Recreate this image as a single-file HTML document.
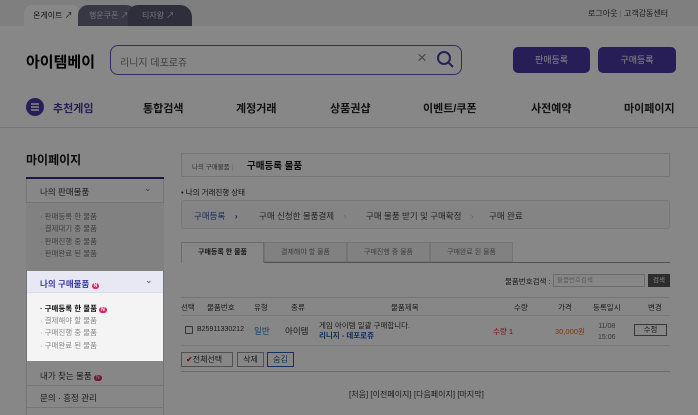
<!DOCTYPE html>
<html><head><meta charset="utf-8"><style>
*{box-sizing:border-box;margin:0;padding:0}
body{width:698px;height:415px;overflow:hidden;position:relative;background:#fff;font-family:"Liberation Sans","Noto Sans CJK KR",sans-serif;color:#333}
.a{position:absolute;white-space:nowrap}
#ov{position:absolute;left:0;top:0;width:698px;height:415px;background:rgba(0,0,0,0.47);z-index:5}
.hl{z-index:6}
</style></head><body>
<div class="a" style="left:0;top:0;width:698px;height:26px;background:#f0f0f0"></div>
<div class="a" style="left:24px;top:5px;width:56px;height:21px;background:#fff;border-radius:8px 8px 0 0;font-size:8px;line-height:21px;padding-left:9px;color:#222">온게이트 ↗</div>
<div class="a" style="left:78px;top:5px;width:58px;height:21px;background:#6a6a82;border-radius:10px 10px 0 0;font-size:8px;line-height:21px;padding-left:11px;color:#ddd">행운쿠폰 ↗</div>
<div class="a" style="left:128px;top:5px;width:64px;height:21px;background:#5a5a72;border-radius:10px 12px 0 0;font-size:8px;line-height:21px;padding-left:14px;color:#ddd">티자왕 ↗</div>
<div class="a" style="left:588px;top:8px;font-size:8px;color:#333">로그아웃 <span style="color:#bbb">|</span> 고객감동센터</div>
<div class="a" style="left:26px;top:51px;font-size:15px;font-weight:bold;color:#000">아이템베이</div>
<div class="a" style="left:110px;top:45px;width:352px;height:30px;border:1.5px solid #5b4fc4;border-radius:8px;background:#fff"></div>
<div class="a" style="left:120px;top:54px;font-size:10px;color:#777">리니지 데포로쥬</div>
<div class="a" style="left:417px;top:48px;font-size:17px;color:#888">×</div>
<svg class="a" style="left:436px;top:50px" width="18" height="20"><circle cx="8" cy="8" r="6" fill="none" stroke="#4a3fa8" stroke-width="2"/><path d="M12 12l5 5" stroke="#4a3fa8" stroke-width="2"/></svg>
<div class="a" style="left:513px;top:47px;width:77px;height:26px;background:#4a3aa6;border-radius:5px;color:#fff;font-size:9px;text-align:center;line-height:26px">판매등록</div>
<div class="a" style="left:598px;top:47px;width:78px;height:26px;background:#4a3aa6;border-radius:5px;color:#fff;font-size:9px;text-align:center;line-height:26px">구매등록</div>
<svg class="a" style="left:26px;top:98px" width="18" height="18"><circle cx="9" cy="9" r="9" fill="#4a3aa6"/><path d="M5 6h8M5 9h8M5 12h8" stroke="#fff" stroke-width="1.5"/></svg>
<div class="a" style="left:53px;top:100px;font-size:11px;font-weight:bold;color:#4a3aa6">추천게임</div>
<div class="a" style="left:143px;top:100px;font-size:11px;font-weight:bold;color:#222">통합검색</div>
<div class="a" style="left:236px;top:100px;font-size:11px;font-weight:bold;color:#222">계정거래</div>
<div class="a" style="left:330px;top:100px;font-size:11px;font-weight:bold;color:#222">상품권샵</div>
<div class="a" style="left:423px;top:100px;font-size:11px;font-weight:bold;color:#222">이벤트/쿠폰</div>
<div class="a" style="left:531px;top:100px;font-size:11px;font-weight:bold;color:#222">사전예약</div>
<div class="a" style="left:624px;top:100px;font-size:11px;font-weight:bold;color:#222">마이페이지</div>
<div class="a" style="left:0;top:127px;width:698px;height:1px;background:#ddd"></div>
<div class="a" style="left:26px;top:151px;font-size:12px;font-weight:bold;color:#111">마이페이지</div>
<div class="a" style="left:26px;top:177px;width:138px;height:2px;background:#3a2a8a"></div>
<div class="a" style="left:26px;top:179px;width:138px;height:236px;border-left:1px solid #ddd;border-right:1px solid #ddd"></div>
<div class="a" style="left:40px;top:186px;font-size:8.5px;color:#333">나의 판매물품</div>
<div class="a" style="left:144px;top:183px;font-size:9px;color:#666">⌄</div>
<div class="a" style="left:26px;top:202px;width:138px;height:69px;background:#f4f4f4;border-top:1px solid #ddd"></div>
<div class="a" style="left:40px;top:211px;font-size:7.5px;line-height:12.3px;color:#777">· 판매등록 한 물품<br>· 결제대기 중 물품<br>· 판매진행 중 물품<br>· 판매완료 된 물품</div>
<div class="a" style="left:40px;top:370px;font-size:8.5px;color:#333">내가 찾는 물품 <span style="background:#e0245e;color:#fff;font-size:5px;padding:0 2px;border-radius:3px">N</span></div>
<div class="a" style="left:26px;top:385px;width:138px;height:1px;background:#ddd"></div>
<div class="a" style="left:40px;top:392px;font-size:8.5px;color:#333">문의 · 흥정 관리</div>
<div class="a" style="left:26px;top:407px;width:138px;height:1px;background:#ddd"></div>
<div class="a" style="left:181px;top:153px;width:489px;height:24px;border:1px solid #ddd"></div>
<div class="a" style="left:192px;top:161px;font-size:6.5px;color:#555">나의 구매물품 <span style="color:#ccc">|</span></div>
<div class="a" style="left:247px;top:158px;font-size:9.5px;font-weight:bold;color:#111">구매등록 물품</div>
<div class="a" style="left:181px;top:187px;font-size:7.5px;color:#222">• 나의 거래진행 상태</div>
<div class="a" style="left:181px;top:200px;width:489px;height:29px;border:1px solid #e2e2e2;border-radius:3px;background:#fafafa"></div>
<div class="a" style="left:194px;top:210px;font-size:8.5px;color:#2a55a8">구매등록 &nbsp;&nbsp; <b>›</b></div>
<div class="a" style="left:259px;top:210px;font-size:8.5px;color:#444">구매 신청한 물품결제 &nbsp;&nbsp; <span style="color:#bbb">›</span></div>
<div class="a" style="left:366px;top:210px;font-size:8.5px;color:#444">구매 물품 받기 및 구매확정 &nbsp;&nbsp; <span style="color:#bbb">›</span></div>
<div class="a" style="left:489px;top:210px;font-size:8.5px;color:#444">구매 완료</div>
<div class="a" style="left:181px;top:242px;width:83px;height:21px;border:1px solid #ccc;border-bottom:none;background:#fff;font-size:7px;font-weight:bold;text-align:center;line-height:20px">구매등록 한 물품</div>
<div class="a" style="left:264px;top:242px;width:83px;height:20px;border:1px solid #ddd;background:#f3f3f3;font-size:7px;color:#777;text-align:center;line-height:19px">결제해야 할 물품</div>
<div class="a" style="left:347px;top:242px;width:83px;height:20px;border:1px solid #ddd;background:#f3f3f3;font-size:7px;color:#777;text-align:center;line-height:19px">구매진행 중 물품</div>
<div class="a" style="left:430px;top:242px;width:83px;height:20px;border:1px solid #ddd;background:#f3f3f3;font-size:7px;color:#777;text-align:center;line-height:19px">구매완료 된 물품</div>
<div class="a" style="left:264px;top:262px;width:406px;height:1px;background:#999"></div>
<div class="a" style="left:505px;top:276px;font-size:7.5px;color:#333">물품번호검색 :</div>
<div class="a" style="left:553px;top:274px;width:92px;height:13px;border:1px solid #ccc;font-size:6.5px;color:#aaa;padding-left:3px;line-height:11px">물품번호검색</div>
<div class="a" style="left:648px;top:274px;width:22px;height:13px;background:#555;color:#fff;font-size:6.5px;text-align:center;line-height:13px">검색</div>
<div class="a" style="left:181px;top:297px;width:489px;height:1px;background:#ddd"></div>
<div class="a" style="left:181px;top:302px;font-size:7.5px;color:#333">선택</div>
<div class="a" style="left:207px;top:302px;font-size:7.5px;color:#333">물품번호</div>
<div class="a" style="left:254px;top:302px;font-size:7.5px;color:#333">유형</div>
<div class="a" style="left:291px;top:302px;font-size:7.5px;color:#333">종류</div>
<div class="a" style="left:391px;top:302px;font-size:7.5px;color:#333">물품제목</div>
<div class="a" style="left:514px;top:302px;font-size:7.5px;color:#333">수량</div>
<div class="a" style="left:558px;top:302px;font-size:7.5px;color:#333">가격</div>
<div class="a" style="left:593px;top:302px;font-size:7.5px;color:#333">등록일시</div>
<div class="a" style="left:648px;top:302px;font-size:7.5px;color:#333">변경</div>
<div class="a" style="left:181px;top:315px;width:489px;height:1px;background:#e5e5e5"></div>
<div class="a" style="left:185px;top:326px;width:8px;height:8px;border:1px solid #666;border-radius:1px"></div>
<div class="a" style="left:197px;top:326px;font-size:7px;color:#333">B25911330212</div>
<div class="a" style="left:254px;top:325px;font-size:8.5px;color:#1a7abf">일반</div>
<div class="a" style="left:285px;top:325px;font-size:8.5px;color:#333">아이템</div>
<div class="a" style="left:319px;top:320px;font-size:7.5px;color:#333">게임 아이템 일괄 구매합니다.</div>
<div class="a" style="left:319px;top:330px;font-size:7.5px;font-weight:bold;color:#1a5ab0">리니지 - 데포로쥬</div>
<div class="a" style="left:493px;top:326px;font-size:7.5px;color:#e02020">수량 1</div>
<div class="a" style="left:555px;top:326px;font-size:7.5px;color:#e07a00">30,000원</div>
<div class="a" style="left:598px;top:321px;font-size:7px;color:#666;text-align:center;line-height:11px">11/08<br>15:06</div>
<div class="a" style="left:634px;top:324px;width:33px;height:12px;border:1px solid #666;font-size:7.5px;text-align:center;line-height:10px">수정</div>
<div class="a" style="left:181px;top:345px;width:489px;height:1px;background:#e5e5e5"></div>
<div class="a" style="left:181px;top:352px;width:52px;height:15px;border:1px solid #999;font-size:8px;line-height:13px;padding-left:4px"><span style="color:#c01">✔</span>전체선택</div>
<div class="a" style="left:237px;top:352px;width:27px;height:15px;border:1px solid #999;font-size:8px;line-height:13px;text-align:center">삭제</div>
<div class="a" style="left:267px;top:352px;width:27px;height:15px;border:1px solid #2a5ab0;font-size:8px;line-height:13px;text-align:center;color:#2a5ab0">숨김</div>
<div class="a" style="left:181px;top:371px;width:489px;height:1px;background:#ccc"></div>
<div class="a" style="left:349px;top:389px;font-size:8px;color:#333">[처음] [이전페이지] [다음페이지] [마지막]</div>

<div id="ov"></div>
<div class="a hl" style="left:27px;top:271px;width:136px;height:90px;background:#f4f4f4"></div>
<div class="a hl" style="left:27px;top:271px;width:136px;height:22px;background:#e8e8f4;border-bottom:1px solid #ddd"></div>
<div class="a hl" style="left:40px;top:278px;font-size:8.5px;font-weight:bold;color:#3a3aa0">나의 구매물품 <span style="background:#e0245e;color:#fff;font-size:5px;padding:0 2px;border-radius:3px">N</span></div>
<div class="a hl" style="left:145px;top:275px;font-size:9px;color:#3a3aa0">⌄</div>
<div class="a hl" style="left:40px;top:303px;font-size:7.5px;font-weight:bold;color:#111">· 구매등록 한 물품 <span style="background:#e0245e;color:#fff;font-size:5px;padding:0 2px;border-radius:3px">N</span></div>
<div class="a hl" style="left:40px;top:315px;font-size:7.5px;line-height:12.3px;color:#888">· 결제해야 할 물품<br>· 구매진행 중 물품<br>· 구매완료 된 물품</div>
</body></html>
